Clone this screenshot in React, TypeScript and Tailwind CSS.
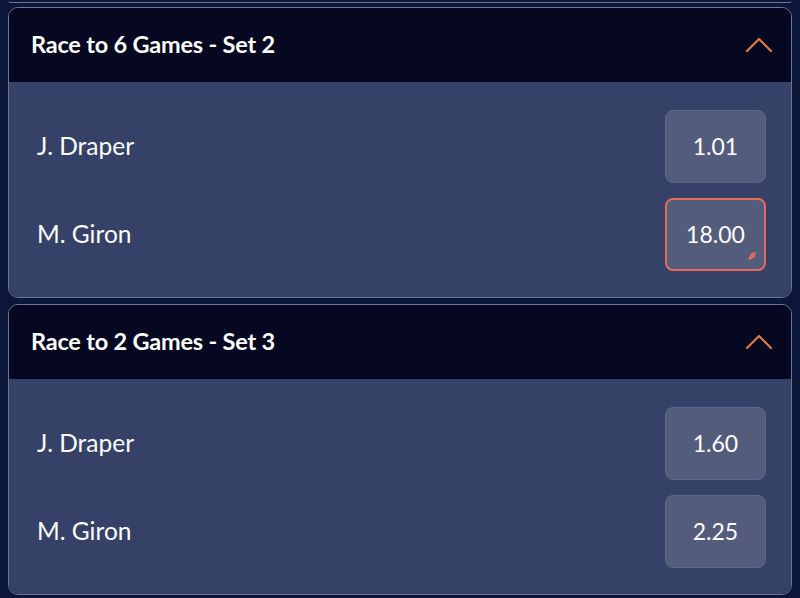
import React from "react";

type Row = { name: string; odds: string; selected?: boolean };

function Chevron() {
  return (
    <svg width="28" height="16" viewBox="0 0 28 16" fill="none">
      <path d="M2 14 L14 2 L26 14" stroke="#e27a45" strokeWidth="2.2" strokeLinecap="round" strokeLinejoin="round" />
    </svg>
  );
}

function Market({ title, rows }: { title: string; rows: Row[] }) {
  return (
    <div className="mx-2 rounded-[10px] border border-[#6a7597] overflow-hidden">
      <div className="h-[74px] bg-[#050820] flex items-center justify-between pl-[22px] pr-[18px]">
        <span className="text-[23.5px] font-bold text-white tracking-[-0.2px]">{title}</span>
        <Chevron />
      </div>
      <div className="bg-[#354166] pt-[28px] pb-[26px] pl-[28px] pr-[25px] flex flex-col gap-[15px]">
        {rows.map((r) => (
          <div key={r.name} className="flex items-center justify-between">
            <span className="text-[24.5px] text-white">{r.name}</span>
            <div
              className={
                "relative w-[101px] h-[73px] rounded-[8px] bg-[#545c7c] flex items-center justify-center text-[23px] text-white " +
                (r.selected ? "border-2 border-[#e46a5c]" : "border border-[#5e6787]")
              }
            >
              {r.odds}
              {r.selected && (
                <svg className="absolute right-[8px] bottom-[9px]" width="8" height="8" viewBox="0 0 8 8">
                  <path d="M0 8 L2 3 Q4 0 8 0 L7 4 Q5 7 0 8 Z" fill="#e46a5c" />
                </svg>
              )}
            </div>
          </div>
        ))}
      </div>
    </div>
  );
}

export default function App() {
  return (
    <div
      className="w-[800px] h-[598px] bg-[#0b1638] overflow-hidden"
      style={{ fontFamily: "Lato, 'Noto Sans', sans-serif" }}
    >
      <div className="mx-2 h-[3px] border-b border-[#6a7597] rounded-b-[10px]" />
      <div className="h-[4px]" />
      <Market
        title="Race to 6 Games - Set 2"
        rows={[
          { name: "J. Draper", odds: "1.01" },
          { name: "M. Giron", odds: "18.00", selected: true },
        ]}
      />
      <div className="h-[6px]" />
      <Market
        title="Race to 2 Games - Set 3"
        rows={[
          { name: "J. Draper", odds: "1.60" },
          { name: "M. Giron", odds: "2.25" },
        ]}
      />
    </div>
  );
}
